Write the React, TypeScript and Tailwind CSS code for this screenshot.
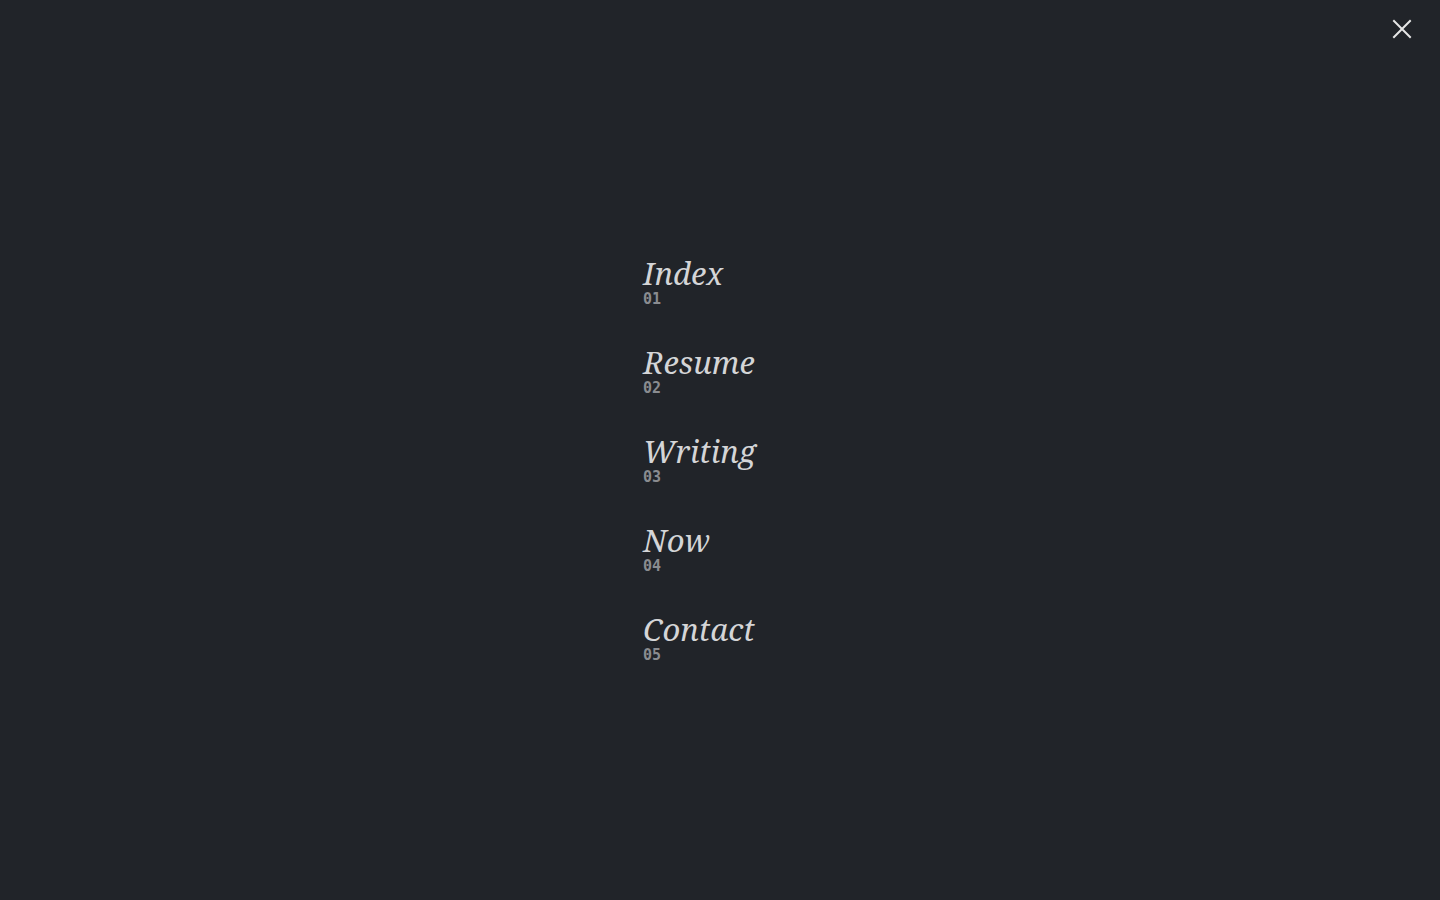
const items = [
  { title: 'Index', num: '01' },
  { title: 'Resume', num: '02' },
  { title: 'Writing', num: '03' },
  { title: 'Now', num: '04' },
  { title: 'Contact', num: '05' },
];

export default function App() {
  return (
    <div className="relative flex h-[900px] w-full items-center justify-center bg-[#212429]">
      <button className="absolute right-[28px] top-[19px] text-[#e6e6e6]" aria-label="Close">
        <svg width="20" height="20" viewBox="0 0 20 20" fill="none" stroke="currentColor" strokeWidth="2" strokeLinecap="square">
          <path d="M2 2 L18 18 M18 2 L2 18" />
        </svg>
      </button>
      <nav className="flex w-[154px] flex-col gap-[37px] pt-[18px]">
        {items.map(it => (
          <a key={it.num} href="#" className="flex flex-col">
            <span className="font-['Noto_Serif','DejaVu_Serif',serif] text-[31px] italic leading-[36px] text-[#d4d5d7]">{it.title}</span>
            <span className="font-['DejaVu_Sans_Mono',monospace] text-[15px] font-bold leading-[16px] text-[#8a8c90]">{it.num}</span>
          </a>
        ))}
      </nav>
    </div>
  );
}
